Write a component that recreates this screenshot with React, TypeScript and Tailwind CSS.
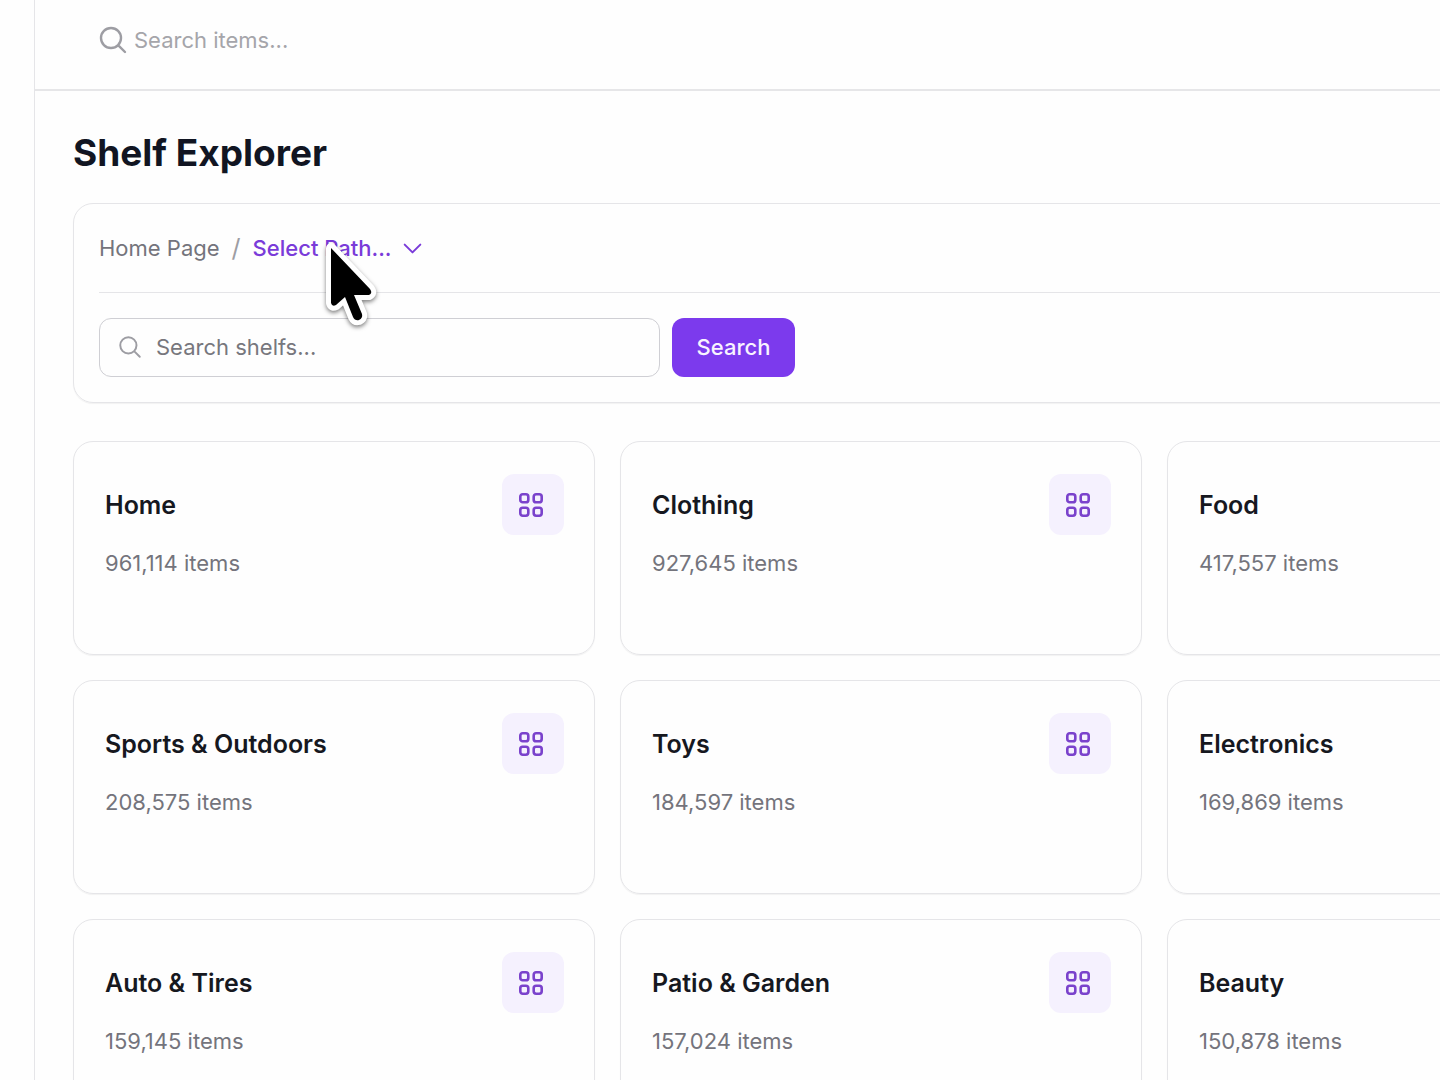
import { HiOutlineChevronDown, HiOutlineMagnifyingGlass } from "react-icons/hi2";

interface Shelf {
  name: string;
  items: number;
}

const SHELVES: Shelf[] = [
  { name: "Home", items: 961114 },
  { name: "Clothing", items: 927645 },
  { name: "Food", items: 417557 },
  { name: "Sports & Outdoors", items: 208575 },
  { name: "Toys", items: 184597 },
  { name: "Electronics", items: 169869 },
  { name: "Auto & Tires", items: 159145 },
  { name: "Patio & Garden", items: 157024 },
  { name: "Beauty", items: 150878 },
];

export default function App() {
  return (
    <div className="flex h-screen overflow-hidden bg-[#fefefe] font-['Inter',sans-serif] text-[22px] leading-8">
      {/* Collapsed sidebar edge */}
      <aside className="w-[35px] shrink-0 border-r border-[#e5e5e8]" />
      <div className="min-w-0 flex-1">
        <TopBar />
        <main className="px-[38px] pt-[38px]">
          <div className="min-w-[1616px]">
            <h1 className="text-[37px] leading-[48px] font-bold text-[#111522]">
              Shelf Explorer
            </h1>
            <ExplorerPanel />
            <section
              aria-label="Shelves"
              className="mt-[38px] grid grid-cols-[repeat(3,minmax(522px,1fr))] gap-[25px]"
            >
              {SHELVES.map((shelf) => (
                <ShelfCard key={shelf.name} shelf={shelf} />
              ))}
            </section>
          </div>
        </main>
      </div>
    </div>
  );
}

function TopBar() {
  return (
    <header className="flex h-[91px] items-center border-b-2 border-[#e6e6e8] pb-[9px] pl-[62px]">
      <label htmlFor="item-search" className="text-[#9d9da3]">
        <HiOutlineMagnifyingGlass className="size-8" strokeWidth={1.8} aria-label="Search items" />
      </label>
      <input
        id="item-search"
        type="search"
        placeholder="Search items..."
        className="ml-[5px] w-[480px] bg-transparent outline-none placeholder:text-[#a5a5aa]"
      />
    </header>
  );
}

function ExplorerPanel() {
  return (
    <section className="mt-[26px] rounded-[20px] border border-[#e5e5e8] px-[25px] pt-[25px] pb-[25px] shadow-[0_1px_1px_rgba(0,0,0,0.05)]">
      <nav
        aria-label="Breadcrumb"
        className="flex items-center border-b border-[#e5e5e8] pt-[3px] pb-7"
      >
        <a href="#home" className="text-[#74747c]">
          Home Page
        </a>
        <span className="mx-3 text-[25px] text-[#9d9da3]">/</span>
        <button
          type="button"
          className="relative flex items-center gap-2 font-medium text-[#7a3bd9]"
        >
          Select Path...
          <HiOutlineChevronDown className="size-[25px]" strokeWidth={1.9} />
          <Pointer />
        </button>
      </nav>
      <form className="mt-[25px] flex gap-3" onSubmit={(e) => e.preventDefault()}>
        <div className="flex h-[59px] w-[561px] items-center gap-[13px] rounded-xl border border-[#cfcfd4] px-[17px] pb-px">
          <label htmlFor="shelf-search" className="text-[#9d9da3]">
            <HiOutlineMagnifyingGlass
              className="size-[26px]"
              strokeWidth={1.8}
              aria-label="Search shelfs"
            />
          </label>
          <input
            id="shelf-search"
            type="search"
            placeholder="Search shelfs..."
            className="min-w-0 flex-1 bg-transparent outline-none placeholder:text-[#77777d]"
          />
        </div>
        <button
          type="submit"
          className="h-[59px] w-[123px] rounded-xl bg-[#7c3aed] pb-px font-medium text-[#f8f3ff]"
        >
          Search
        </button>
      </form>
    </section>
  );
}

function ShelfCard({ shelf }: { shelf: Shelf }) {
  return (
    <article className="h-[214px] rounded-[20px] border border-[#e5e5e8] pt-8 pr-[30px] pl-[31px] shadow-[0_1px_1px_rgba(0,0,0,0.05)]">
      <div className="flex items-center justify-between">
        <h2 className="text-[25px] font-semibold text-[#16181f]">{shelf.name}</h2>
        <span className="flex h-[61px] w-[62px] items-center justify-center rounded-xl bg-[#f5f1fe] pr-1">
          <GridIcon />
        </span>
      </div>
      <p className="mt-3 text-[#74747c]">{shelf.items.toLocaleString("en-US")} items</p>
    </article>
  );
}

function GridIcon() {
  return (
    <svg
      viewBox="0 0 24 24"
      className="size-6 text-[#7a42cc]"
      fill="none"
      stroke="currentColor"
      strokeWidth="2.6"
      aria-hidden="true"
    >
      <rect x="1.3" y="1.3" width="8" height="8" rx="2.4" />
      <rect x="14.7" y="1.3" width="8" height="8" rx="2.4" />
      <rect x="1.3" y="14.7" width="8" height="8" rx="2.4" />
      <rect x="14.7" y="14.7" width="8" height="8" rx="2.4" />
    </svg>
  );
}

/** Mouse pointer hovering over the path selector. */
function Pointer() {
  return (
    <svg
      viewBox="0 0 60 94"
      className="pointer-events-none absolute top-[2px] left-[67px] h-[94px] w-[60px] drop-shadow-[0_2px_2px_rgba(0,0,0,0.5)]"
      aria-hidden="true"
    >
      <path
        d="M11 14 L11 69 Q12 73 16 71 L25 63 L33 83 Q35 87 39 86 Q43 84 42 80 L34 61 L49 61 Q53 59 50 55 Z"
        fill="#000"
        stroke="#fff"
        strokeWidth="10"
        strokeLinejoin="round"
        paintOrder="stroke"
      />
    </svg>
  );
}
